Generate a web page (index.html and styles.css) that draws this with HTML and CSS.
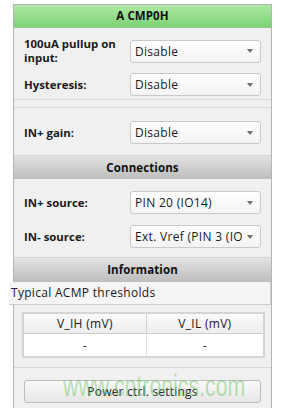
FILE: index.html
```html
<!DOCTYPE html>
<html lang="en">
<head>
  <meta charset="UTF-8">
  <title>A CMP0H</title>
  <link rel="stylesheet" href="styles.css">
</head>
<body>
  <div class="panel">
    <div class="title green">A CMP0H</div>

    <div class="section first">
      <div class="row">
        <label>100uA pullup on input:</label>
        <div class="select"><span>Disable</span><i class="arrow"></i></div>
      </div>
      <div class="row">
        <label>Hysteresis:</label>
        <div class="select"><span>Disable</span><i class="arrow"></i></div>
      </div>
    </div>

    <div class="section gain">
      <div class="row">
        <label>IN+ gain:</label>
        <div class="select"><span>Disable</span><i class="arrow"></i></div>
      </div>
    </div>

    <div class="title gray">Connections</div>
    <div class="section conn">
      <div class="row">
        <label>IN+ source:</label>
        <div class="select"><span>PIN 20 (IO14)</span><i class="arrow"></i></div>
      </div>
      <div class="row">
        <label>IN- source:</label>
        <div class="select"><span>Ext. Vref (PIN 3 (IO3))</span><i class="arrow"></i></div>
      </div>
    </div>

    <div class="title gray info">Information</div>
    <div class="info-caption">Typical ACMP thresholds</div>
    <div class="info-body">
      <table class="thresholds">
        <tr><th>V_IH (mV)</th><th>V_IL (mV)</th></tr>
        <tr><td>-</td><td>-</td></tr>
      </table>
    </div>

    <div class="section footer">
      <button class="power">Power ctrl. settings</button>
    </div>

    <div class="watermark">www.cntronics.com</div>
  </div>
</body>
</html>
```

FILE: styles.css
```css
html, body {
  margin: 0;
  padding: 0;
  background: #ffffff;
  overflow: hidden;
}
body {
  font-family: "Open Sans", "DejaVu Sans", sans-serif;
  font-size: 12px;
  letter-spacing: 0.3px;
  color: #1a1a1a;
}
.panel {
  position: relative;
  margin: 4px 0 0 13px;
  width: 257px;
  height: 420px;
  border: 1px solid #b4b4b4;
  border-bottom: none;
  background: #f0f0f0;
}
.title {
  text-align: center;
  font-weight: bold;
  font-size: 11.5px;
  letter-spacing: 0.1px;
  color: #111;
}
.green {
  height: 22px;
  line-height: 22px;
  background: linear-gradient(#aee9a6, #7bd373);
  border-bottom: 1px solid #9cc898;
}
.gray {
  height: 23px;
  line-height: 23px;
  background: linear-gradient(#e2e2e2, #bdbdbd);
  border-top: 1px solid #d4d4d4;
}
.gray.info {
  height: 24px;
  line-height: 24px;
}
.section {
  display: flex;
  flex-direction: column;
  padding: 0 10px;
}
.first {
  gap: 8px;
  padding-top: 9px;
  padding-bottom: 3px;
  border-bottom: 1px solid #d8d8d8;
  margin-bottom: 7px;
}
.gain {
  padding-top: 13px;
  padding-bottom: 11px;
  border-top: 1px solid #d8d8d8;
}
.conn {
  gap: 11px;
  padding-top: 12px;
  padding-bottom: 9px;
}
.row {
  display: grid;
  grid-template-columns: 106px 131px;
  align-items: center;
  min-height: 23px;
}
.row label {
  font-weight: bold;
  font-size: 11.4px;
  letter-spacing: 0;
  line-height: 14px;
}
.select {
  display: flex;
  align-items: center;
  height: 21px;
  padding: 0 7px 0 4px;
  border: 1px solid #c9c9c9;
  border-radius: 3px;
  background: linear-gradient(#ffffff, #f3f3f3);
  overflow: hidden;
}
.select span {
  flex: 1;
  white-space: nowrap;
  overflow: hidden;
}
.arrow {
  flex: none;
  width: 0;
  height: 0;
  margin-left: 5px;
  border-left: 3.5px solid transparent;
  border-right: 3.5px solid transparent;
  border-top: 4px solid #6e6e6e;
}
.info-caption {
  height: 22px;
  line-height: 22px;
  margin-left: -5px;
  padding-left: 2px;
  background: #f5f5f5;
  border-right: 1px solid #cdcdcd;
  border-bottom: 1px solid #cdcdcd;
}
.info-body {
  padding: 7px 6px 9px 8px;
  border-bottom: 1px solid #d8d8d8;
}
.thresholds {
  width: 100%;
  border-collapse: collapse;
  border: 2px solid #d4d4d4;
  background: #ffffff;
}
.thresholds th {
  height: 16px;
  font-weight: normal;
  background: linear-gradient(#fbfbfb, #ececec);
  border: 1px solid #d0d0d0;
}
.thresholds td {
  height: 20px;
  text-align: center;
  border: 1px solid #e2e2e2;
}
.footer {
  padding-top: 12px;
}
.power {
  margin: 0;
  width: 237px;
  height: 23px;
  font-family: inherit;
  font-size: 12px;
  letter-spacing: 0.2px;
  color: #222;
  border: 1px solid #bdbdbd;
  border-radius: 3px;
  background: linear-gradient(#fafafa, #e6e6e6);
}
.watermark {
  position: absolute;
  left: 49px;
  top: 366px;
  font-family: "Liberation Sans", Arial, sans-serif;
  font-size: 30px;
  line-height: 1;
  letter-spacing: 0;
  color: rgba(100, 190, 90, 0.45);
  transform: scaleX(0.71);
  transform-origin: left top;
  white-space: nowrap;
  pointer-events: none;
}
```
